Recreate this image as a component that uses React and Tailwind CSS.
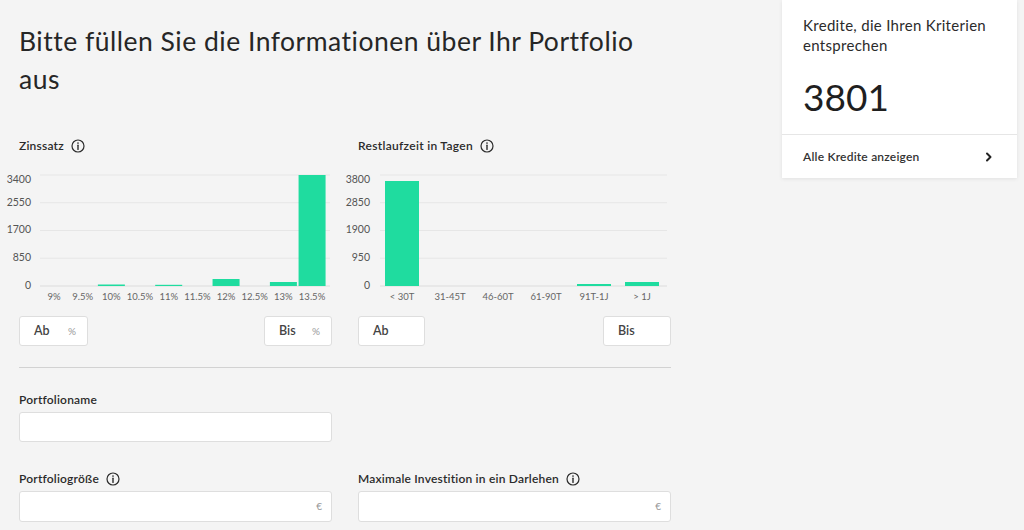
import React from "react";

const GREEN = "#1fdc9f";

function InfoIcon() {
  return (
    <svg width="14" height="14" viewBox="0 0 14 14" className="shrink-0">
      <circle cx="7" cy="7" r="6" fill="none" stroke="#2b2b2b" strokeWidth="1.2" />
      <line x1="7" y1="6.2" x2="7" y2="10.4" stroke="#2b2b2b" strokeWidth="1.4" strokeLinecap="round" />
      <circle cx="7" cy="4" r="0.85" fill="#2b2b2b" />
    </svg>
  );
}

function Chart({ yLabels, xLabels, heights, bandStart, bandEnd, gridStart, gridEnd, barWidth }) {
  const gridYs = [10, 37.75, 65.5, 93.25, 121];
  const labelYs = [15, 38, 65.5, 93.5, 121];
  const band = (bandEnd - bandStart) / xLabels.length;
  return (
    <svg width="313" height="140" viewBox="0 0 313 140" className="overflow-visible block">
      {gridYs.map((y, i) => (
        <line key={i} x1={gridStart} x2={gridEnd} y1={y} y2={y} stroke={i === 4 ? "#dcdcdc" : "#e6e6e6"} strokeWidth="1" />
      ))}
      {yLabels.map((l, i) => (
        <text key={l} x="12" y={labelYs[i]} textAnchor="end" dominantBaseline="middle" fontSize="10.5" fill="#555" fontFamily="Lato, sans-serif">
          {l}
        </text>
      ))}
      {heights.map((h, i) =>
        h > 0 ? (
          <rect key={i} x={bandStart + band * i + (band - barWidth) / 2} y={121 - h} width={barWidth} height={h} fill={GREEN} />
        ) : null
      )}
      {xLabels.map((l, i) => (
        <text key={l} x={bandStart + band * i + band / 2} y="132.5" textAnchor="middle" dominantBaseline="middle" fontSize="9.5" fill="#666" fontFamily="Lato, sans-serif">
          {l}
        </text>
      ))}
    </svg>
  );
}

function SmallBox({ label, unit, w }) {
  return (
    <div className={`h-[30px] ${w} bg-white border border-[#dedede] rounded-[3px] flex items-center pl-[14px] pr-[11px]`}>
      <span className="text-[12.5px] font-semibold text-[#444]">{label}</span>
      {unit && <span className="ml-auto text-[10px] text-[#999]">{unit}</span>}
    </div>
  );
}

export default function App() {
  return (
    <div className="min-h-screen bg-[#f4f4f4] flex font-['Lato',sans-serif] text-[#2b2b2b]">
      <div className="w-[652px] ml-[19px] shrink-0">
        <h1 className="pt-[22px] text-[26.5px] leading-[38px] tracking-[0.5px] font-normal text-[#262626]">
          Bitte füllen Sie die Informationen über Ihr Portfolio
          <br />
          aus
        </h1>

        <div className="grid grid-cols-[313px_313px] gap-x-[26px] mt-[40px]">
          <div>
            <div className="flex items-center gap-[7px] h-[16px]">
              <span className="text-[12px] font-semibold tracking-[0.2px]">Zinssatz</span>
              <InfoIcon />
            </div>
            <div className="mt-[11px]">
              <Chart
                yLabels={["3400", "2550", "1700", "850", "0"]}
                xLabels={["9%", "9.5%", "10%", "10.5%", "11%", "11.5%", "12%", "12.5%", "13%", "13.5%"]}
                heights={[0, 0, 1.5, 0, 1.2, 0, 7, 0, 4, 111]}
                bandStart={20.7}
                bandEnd={307.4}
                gridStart={21}
                gridEnd={311}
                barWidth={27}
              />
            </div>
            <div className="mt-[11px] flex justify-between">
              <SmallBox label="Ab" unit="%" w="w-[69px]" />
              <SmallBox label="Bis" unit="%" w="w-[68px]" />
            </div>
          </div>

          <div>
            <div className="flex items-center gap-[7px] h-[16px]">
              <span className="text-[12px] font-semibold tracking-[0.3px]">Restlaufzeit in Tagen</span>
              <InfoIcon />
            </div>
            <div className="mt-[11px]">
              <Chart
                yLabels={["3800", "2850", "1900", "950", "0"]}
                xLabels={["< 30T", "31-45T", "46-60T", "61-90T", "91T-1J", "> 1J"]}
                heights={[105, 0, 0, 0, 2, 4]}
                bandStart={20}
                bandEnd={308}
                gridStart={22}
                gridEnd={309}
                barWidth={34}
              />
            </div>
            <div className="mt-[11px] flex justify-between">
              <SmallBox label="Ab" w="w-[67px]" />
              <SmallBox label="Bis" w="w-[68px]" />
            </div>
          </div>
        </div>

        <div className="mt-[21px] border-t border-[#d2d2d2]" />

        <div className="mt-[24px] w-[313px]">
          <div className="h-[16px] flex items-center text-[12px] font-semibold tracking-[0.2px]">Portfolioname</div>
          <div className="mt-[4px] h-[30px] bg-white border border-[#dedede] rounded-[3px]" />
        </div>

        <div className="mt-[29px] grid grid-cols-[313px_313px] gap-x-[26px]">
          <div>
            <div className="h-[16px] flex items-center gap-[7px]">
              <span className="text-[12px] font-semibold tracking-[0.2px]">Portfoliogröße</span>
              <InfoIcon />
            </div>
            <div className="mt-[4px] h-[31px] bg-white border border-[#dedede] rounded-[3px] flex items-center justify-end pr-[9px]">
              <span className="text-[10px] text-[#999]">€</span>
            </div>
          </div>
          <div>
            <div className="h-[16px] flex items-center gap-[7px]">
              <span className="text-[12px] font-semibold tracking-[0.2px]">Maximale Investition in ein Darlehen</span>
              <InfoIcon />
            </div>
            <div className="mt-[4px] h-[31px] bg-white border border-[#dedede] rounded-[3px] flex items-center justify-end pr-[9px]">
              <span className="text-[10px] text-[#999]">€</span>
            </div>
          </div>
        </div>
      </div>

      <div className="ml-[111px] w-[235px] shrink-0 self-start bg-white shadow-[0_1px_4px_rgba(0,0,0,0.08)]">
        <div className="px-[21px] pt-[15px] pb-[15px] border-b border-[#e6e6e6]">
          <div className="text-[15px] leading-[20px] tracking-[0.3px] text-[#2b2b2b]">
            Kredite, die Ihren Kriterien entsprechen
          </div>
          <div className="mt-[20px] text-[37px] leading-[44px] font-normal text-[#1f1f1f]">3801</div>
        </div>
        <div className="h-[43px] px-[21px] flex items-center justify-between">
          <span className="text-[12px] font-semibold tracking-[0.2px] text-[#333]">Alle Kredite anzeigen</span>
          <svg width="8" height="10" viewBox="0 0 8 10" className="mr-[3px]">
            <path d="M2 1.5 L5.5 5 L2 8.5" fill="none" stroke="#222" strokeWidth="2" strokeLinecap="round" strokeLinejoin="round" />
          </svg>
        </div>
      </div>
    </div>
  );
}
